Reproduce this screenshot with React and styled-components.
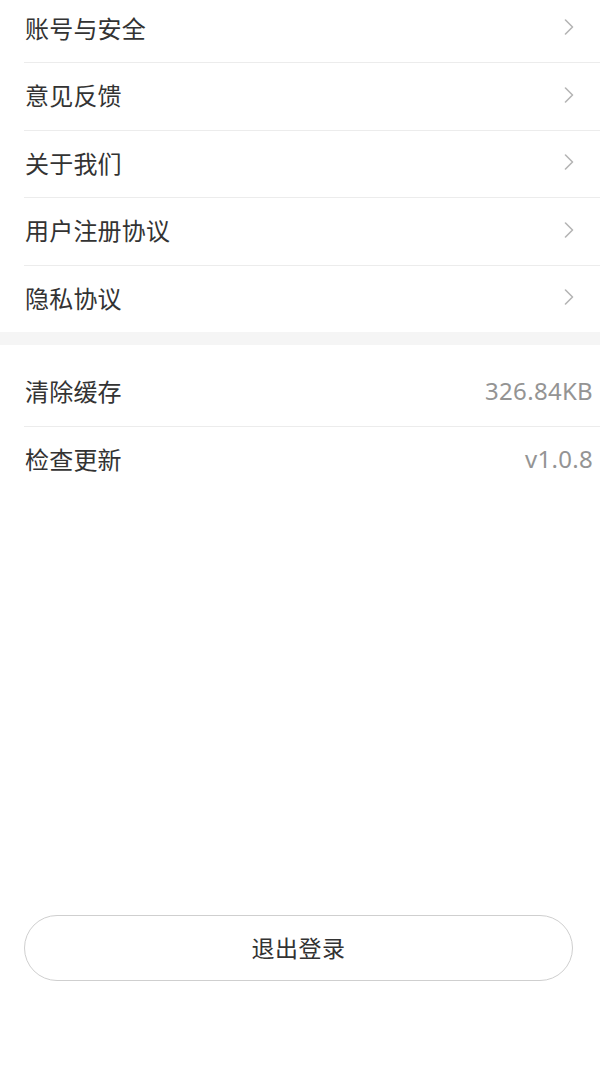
import React from "react";
import styled, { createGlobalStyle } from "styled-components";

const GlobalStyle = createGlobalStyle`
  html, body {
    margin: 0;
    padding: 0;
    background: #fff;
  }
  body {
    font-family: "Noto Sans", "Noto Sans CJK SC", sans-serif;
    -webkit-font-smoothing: antialiased;
  }
`;

const Page = styled.div`
  display: flex;
  flex-direction: column;
  min-height: 100vh;
  box-sizing: border-box;
  overflow: hidden;
`;

const Section = styled.div`
  display: flex;
  flex-direction: column;
  padding-top: ${(p) => p.padTop || 0}px;
  margin-top: ${(p) => p.offset || 0}px;
`;

const Gap = styled.div`
  height: 13px;
  background: #f5f5f5;
`;

const Row = styled.div`
  display: flex;
  align-items: center;
  justify-content: space-between;
  height: 63.5px;
  padding-bottom: 3px;
  margin-left: 24px;
  padding-left: 1px;
  padding-right: ${(p) => (p.value ? 7 : 26)}px;
  border-bottom: ${(p) => (p.last ? "none" : "1px solid #ececec")};
`;

const Label = styled.span`
  font-family: "Noto Sans CJK SC", sans-serif;
  font-size: 24px;
  color: #333;
  letter-spacing: 0.2px;
`;

const Value = styled.span`
  font-family: "Noto Sans", "Noto Sans CJK SC", sans-serif;
  font-size: 24px;
  color: #949494;
  letter-spacing: 0.3px;
`;

const Footer = styled.div`
  margin-top: auto;
  padding: 0 27px 86px 24px;
`;

const LogoutButton = styled.button`
  display: flex;
  align-items: center;
  justify-content: center;
  width: 100%;
  height: 66px;
  padding: 0 0 3px;
  border: 1px solid #cfcfcf;
  border-radius: 33px;
  background: #fff;
  font-family: "Noto Sans CJK SC", sans-serif;
  font-size: 23px;
  color: #333;
  letter-spacing: 0.5px;
`;

const Chevron = () => (
  <svg width="10" height="16" viewBox="0 0 10 16" fill="none">
    <path d="M1.5 1L8.5 8L1.5 15" stroke="#b5b5b5" strokeWidth="1.6" strokeLinecap="round" strokeLinejoin="round" />
  </svg>
);

const links = ["账号与安全", "意见反馈", "关于我们", "用户注册协议", "隐私协议"];
const info = [
  { label: "清除缓存", value: "326.84KB" },
  { label: "检查更新", value: "v1.0.8" },
];

export default function App() {
  return (
    <Page>
      <GlobalStyle />
      <Section offset={-4.5}>
        {links.map((t, i) => (
          <Row key={t} last={i === links.length - 1}>
            <Label>{t}</Label>
            <Chevron />
          </Row>
        ))}
      </Section>
      <Gap />
      <Section padTop={14}>
        {info.map((r, i) => (
          <Row key={r.label} value last={i === info.length - 1}>
            <Label>{r.label}</Label>
            <Value>{r.value}</Value>
          </Row>
        ))}
      </Section>
      <Footer>
        <LogoutButton>退出登录</LogoutButton>
      </Footer>
    </Page>
  );
}
